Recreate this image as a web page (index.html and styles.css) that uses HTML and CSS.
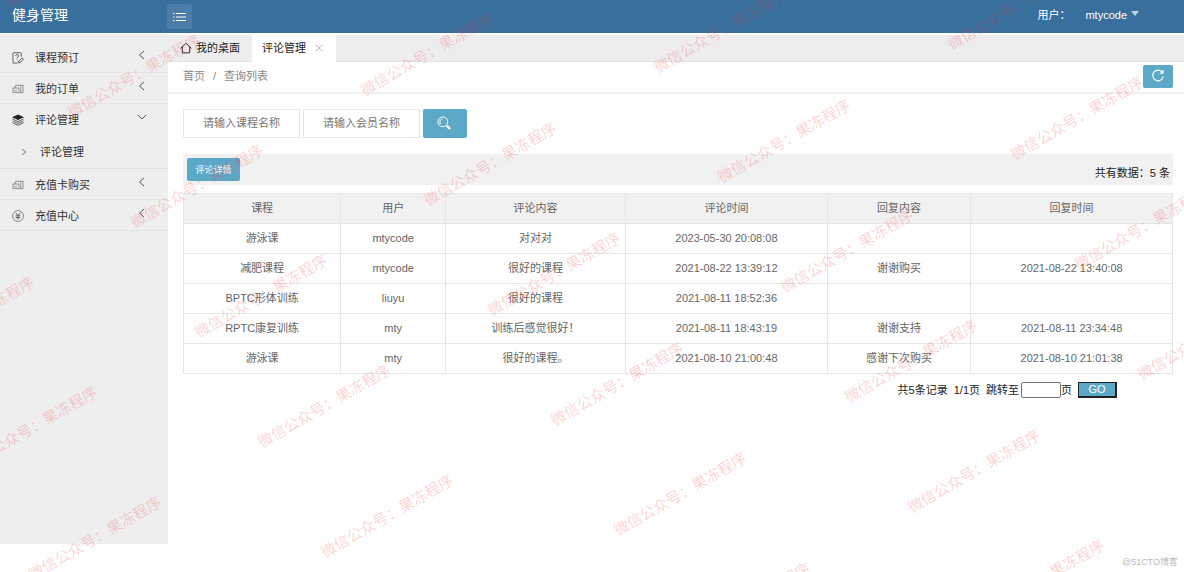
FILE: index.html
```html
<!DOCTYPE html>
<html lang="zh-CN">
<head>
<meta charset="utf-8">
<title>健身管理</title>
<link rel="stylesheet" href="styles.css">
</head>
<body>
<header class="header">
  <div class="logo">健身管理</div>
  <button class="menu-toggle" type="button" aria-label="切换菜单">
    <svg width="14" height="10" viewBox="0 0 14 10" fill="none" stroke="currentColor"><path d="M3 1.500h10M3 5h10M3 8.500h10M0 1.500h1.500M0 5h1.500M0 8.500h1.500"/></svg>
  </button>
  <div class="user">
    <span>用户：</span>
    <button class="user-name" type="button">mtycode<span class="caret"></span></button>
  </div>
</header>

<div class="body">
  <nav class="sidebar">
    <a class="item" href="#">
      <svg class="icon" viewBox="0 0 13 13" fill="none" stroke="currentColor"><path d="M10 5V1.500Q10 .8 9.300.8H1.700Q1 .8 1 1.500V11.200Q1 12 1.700 12H6M3.800 4.200Q4 2.800 5.500 2.800T7.200 4.300Q7.200 5.200 5.600 6V7M5.600 8.200V9M7 11.800L7.500 9.800L11 6.300L12.500 7.700L9 11.300Z"/></svg>
      <span class="label">课程预订</span>
      <svg class="chev" viewBox="0 0 8 8" fill="none" stroke="currentColor"><path d="M6 0L1.500 4L6 8"/></svg>
    </a>
    <a class="item" href="#">
      <svg class="icon faint" viewBox="0 0 13 13" fill="none" stroke="currentColor"><path d="M4 5V2.500H12V10.500H8M9.500 2.500V10.500M1 5.500H7.500V10.500H1ZM2.500 8.500H5.500M2.500 5.500L4 3.500"/></svg>
      <span class="label">我的订单</span>
      <svg class="chev" viewBox="0 0 8 8" fill="none" stroke="currentColor"><path d="M6 0L1.500 4L6 8"/></svg>
    </a>
    <a class="item open" href="#">
      <svg class="icon" viewBox="0 0 13 13" fill="none" stroke="currentColor"><path fill="#222" stroke="none" d="M6.500.5L13 3.500L6.500 6.500L0 3.500Z"/><path d="M.5 5.500L6.500 8.200L12.500 5.500M.5 7.500L6.500 10.200L12.500 7.500M.5 9.500L6.500 12.200L12.500 9.500"/></svg>
      <span class="label">评论管理</span>
      <svg class="chev" viewBox="0 0 8 8" fill="none" stroke="currentColor"><path d="M0 2L4 6L8 2"/></svg>
    </a>
    <a class="subitem" href="#">
      <svg class="sub-chev" viewBox="0 0 8 8" fill="none" stroke="currentColor"><path d="M2.500 1L5.500 4L2.500 7"/></svg>
      <span>评论管理</span>
    </a>
    <a class="item" href="#">
      <svg class="icon faint" viewBox="0 0 13 13" fill="none" stroke="currentColor"><path d="M4 5V2.500H12V10.500H8M9.500 2.500V10.500M1 5.500H7.500V10.500H1ZM2.500 8.500H5.500M2.500 5.500L4 3.500"/></svg>
      <span class="label">充值卡购买</span>
      <svg class="chev" viewBox="0 0 8 8" fill="none" stroke="currentColor"><path d="M6 0L1.500 4L6 8"/></svg>
    </a>
    <a class="item" href="#">
      <svg class="icon" viewBox="0 0 13 13" fill="none" stroke="currentColor"><circle cx="6.500" cy="6.500" r="5.900" stroke-width=".7"/><path d="M4 3L6.500 6L9 3M6.500 6V10.300M4 6.300H9M4 8.200H9"/></svg>
      <span class="label">充值中心</span>
      <svg class="chev" viewBox="0 0 8 8" fill="none" stroke="currentColor"><path d="M6 0L1.500 4L6 8"/></svg>
    </a>
  </nav>

  <main class="main">
    <div class="tabs">
      <a class="tab" href="#"><svg class="home" viewBox="0 0 13 12" fill="none" stroke="currentColor"><path d="M.5 6.500L6.500 1L12.500 6.500M2.500 5V11.300H10.500V5"/></svg>我的桌面</a>
      <div class="tab active">评论管理
        <button class="close" type="button" aria-label="关闭"><svg width="8" height="8" viewBox="0 0 8 8" fill="none" stroke="currentColor"><path d="M.5.5L7.500 7.500M7.500.5L.5 7.500"/></svg></button>
      </div>
    </div>
    <div class="crumbs">
      <a href="#">首页</a><span>/</span><a href="#">查询列表</a>
      <button class="refresh" type="button" aria-label="刷新">
        <svg width="14" height="14" viewBox="0 0 14 14" fill="none" stroke="currentColor" stroke-width="1.200"><path d="M11.500 3.500A5.300 5.300 0 1 0 12.300 7.500M12 1V4.200H8.800"/></svg>
      </button>
    </div>

    <div class="content">
      <form class="search">
        <input type="text" placeholder="请输入课程名称" aria-label="课程名称">
        <input type="text" placeholder="请输入会员名称" aria-label="会员名称">
        <button class="search-btn" type="button" aria-label="搜索">
          <svg width="14" height="14" viewBox="0 0 14 14" fill="none" stroke="currentColor"><circle cx="5.800" cy="5.800" r="4.900"/><path d="M3.500 8A3.300 3.300 0 0 1 5.500 2.800"/><path stroke-width="2.400" stroke-linecap="round" d="M10.500 10.500L12.500 12.300"/></svg>
        </button>
      </form>

      <div class="toolbar">
        <button class="detail" type="button">评论详情</button>
        <span class="count">共有数据：5 条</span>
      </div>

      <table class="grid">
        <colgroup><col class="c-course"><col class="c-user"><col class="c-text"><col class="c-time"><col class="c-reply"><col class="c-time"></colgroup>
        <thead>
          <tr><th>课程</th><th>用户</th><th>评论内容</th><th>评论时间</th><th>回复内容</th><th>回复时间</th></tr>
        </thead>
        <tbody>
          <tr><td>游泳课</td><td>mtycode</td><td>对对对</td><td>2023-05-30 20:08:08</td><td></td><td></td></tr>
          <tr><td>减肥课程</td><td>mtycode</td><td>很好的课程</td><td>2021-08-22 13:39:12</td><td>谢谢购买</td><td>2021-08-22 13:40:08</td></tr>
          <tr><td>BPTC形体训练</td><td>liuyu</td><td>很好的课程</td><td>2021-08-11 18:52:36</td><td></td><td></td></tr>
          <tr><td>RPTC康复训练</td><td>mty</td><td>训练后感觉很好！</td><td>2021-08-11 18:43:19</td><td>谢谢支持</td><td>2021-08-11 23:34:48</td></tr>
          <tr><td>游泳课</td><td>mty</td><td>很好的课程。</td><td>2021-08-10 21:00:48</td><td>感谢下次购买</td><td>2021-08-10 21:01:38</td></tr>
        </tbody>
      </table>

      <form class="pager">
        <span>共5条记录</span>
        <span>1/1页</span>
        <label class="jump">跳转至<input type="text">页</label>
        <button class="go" type="button">GO</button>
      </form>
    </div>
  </main>
</div>

<svg class="watermark" aria-hidden="true">
  <text transform="translate(71 -34) rotate(-30)">微信公众号：果冻程序</text>
  <text transform="translate(134 76) rotate(-30)">微信公众号：果冻程序</text>
  <text transform="translate(197 186) rotate(-30)">微信公众号：果冻程序</text>
  <text transform="translate(261 296) rotate(-30)">微信公众号：果冻程序</text>
  <text transform="translate(324 406) rotate(-30)">微信公众号：果冻程序</text>
  <text transform="translate(387 516) rotate(-30)">微信公众号：果冻程序</text>
  <text transform="translate(-32 318) rotate(-30)">微信公众号：果冻程序</text>
  <text transform="translate(31 428) rotate(-30)">微信公众号：果冻程序</text>
  <text transform="translate(95 538) rotate(-30)">微信公众号：果冻程序</text>
  <text transform="translate(427 54) rotate(-30)">微信公众号：果冻程序</text>
  <text transform="translate(490 164) rotate(-30)">微信公众号：果冻程序</text>
  <text transform="translate(554 274) rotate(-30)">微信公众号：果冻程序</text>
  <text transform="translate(617 384) rotate(-30)">微信公众号：果冻程序</text>
  <text transform="translate(680 494) rotate(-30)">微信公众号：果冻程序</text>
  <text transform="translate(744 604) rotate(-30)">微信公众号：果冻程序</text>
  <text transform="translate(720 31) rotate(-30)">微信公众号：果冻程序</text>
  <text transform="translate(784 141) rotate(-30)">微信公众号：果冻程序</text>
  <text transform="translate(847 251) rotate(-30)">微信公众号：果冻程序</text>
  <text transform="translate(911 361) rotate(-30)">微信公众号：果冻程序</text>
  <text transform="translate(974 471) rotate(-30)">微信公众号：果冻程序</text>
  <text transform="translate(1038 581) rotate(-30)">微信公众号：果冻程序</text>
  <text transform="translate(1014 8) rotate(-30)">微信公众号：果冻程序</text>
  <text transform="translate(1077 118) rotate(-30)">微信公众号：果冻程序</text>
  <text transform="translate(1141 228) rotate(-30)">微信公众号：果冻程序</text>
  <text transform="translate(1204 338) rotate(-30)">微信公众号：果冻程序</text>
</svg>
<div class="credit">@51CTO博客</div>
</body>
</html>
```
FILE: styles.css
```css
* { box-sizing: border-box; }
body {
  margin: 0;
  height: 100vh;
  overflow: hidden;
  position: relative;
  background: #fff;
  color: #333;
  font: 11px/16px "Liberation Sans", "Noto Sans CJK SC", sans-serif;
}
a { color: inherit; text-decoration: none; }
button, input { font: inherit; margin: 0; padding: 0; }
button { border: 0; background: none; color: inherit; cursor: pointer; }
svg { display: block; }

.header {
  display: flex;
  align-items: center;
  height: 33px;
  background: #386f9d;
  color: #fff;
}
.logo { width: 167px; padding: 0 0 3px 12px; font-size: 14px; line-height: 30px; }
.menu-toggle {
  display: grid;
  place-items: center;
  width: 25px;
  height: 25px;
  border-radius: 2px;
  background: #4b7da8;
}
.user { display: flex; gap: 15px; margin-left: auto; padding: 0 45px 3px 0; line-height: 30px; }
.user-name { display: flex; align-items: center; gap: 4px; }
.caret {
  border: 4px solid transparent;
  border-top: 5px solid #c3d3e1;
  border-bottom: 0;
  margin-bottom: 3px;
}

.body { display: flex; padding-top: 2px; }
.sidebar {
  flex: 0 0 168px;
  height: calc(100vh - 63px);
  padding-top: 7px;
  background: #eee;
  box-shadow: 0 -1px #eee;
}
.item {
  display: flex;
  align-items: center;
  height: 31px;
  padding: 1px 22px 0 12px;
  border-bottom: 1px solid #e4e4e4;
}
.item.open { border-bottom-color: transparent; }
.icon { width: 12px; height: 12px; margin-right: 11px; color: #555; }
.faint { color: #888; }
.label { flex: 1; }
.chev { width: 8px; height: 8px; margin-bottom: 5px; color: #555; }
.subitem {
  display: flex;
  align-items: center;
  height: 34px;
  padding-left: 20px;
  border-bottom: 1px solid #e0e0e0;
}
.sub-chev { width: 8px; height: 8px; margin-right: 12px; color: #666; }

.main { flex: 1; min-width: 0; }
.tabs {
  display: flex;
  height: 27px;
  border-bottom: 1px solid #e2e2e4;
  background: #ededf0;
  color: #222;
}
.tab { display: flex; align-items: center; padding: 0 12px; }
.tab.active { height: 27px; gap: 9px; padding: 0 13px 1px 10px; background: #fff; }
.home { width: 12px; height: 12px; margin-right: 4px; }
.close { color: #bbb; }
.crumbs {
  display: flex;
  align-items: center;
  gap: 8px;
  height: 32px;
  padding: 0 11px 2px 15px;
  border-bottom: 2px solid #f1f1f1;
  color: #888;
}
.refresh, .search-btn, .detail { border-radius: 2px; background: #5ca9c7; color: #fff; }
.refresh {
  display: grid;
  place-items: center;
  width: 30px;
  height: 23px;
  margin-left: auto;
}

.content { padding: 15px 11px 0 15px; }
.search { display: flex; gap: 3px; }
.search input {
  width: 117px;
  height: 29px;
  padding-bottom: 1px;
  border: 1px solid #e6e6e6;
  text-align: center;
}
.search input::placeholder { color: #757575; }
.search-btn { display: grid; place-items: center; width: 44px; height: 29px; padding: 0 2px 2px 0; }

.toolbar {
  display: flex;
  align-items: center;
  justify-content: space-between;
  height: 31px;
  margin: 16px 0 8px;
  padding: 0 3px 0 4px;
  background: #f1f1f1;
  color: #222;
}
.detail { width: 53px; height: 23px; font-size: 9px; }
.count { padding-top: 7px; }

.grid {
  width: 100%;
  table-layout: fixed;
  border-collapse: collapse;
  color: #666;
  text-align: center;
}
.c-course { width: 15.9%; }
.c-user { width: 10.6%; }
.c-text { width: 18.2%; }
.c-time { width: 20.4%; }
.c-reply { width: 14.5%; }
.grid th, .grid td {
  height: 30px;
  padding: 0 0 2px;
  border: 1px solid #e6e6e6;
  font-weight: 400;
}
.grid th { background: #f1f1f1; }

.pager {
  display: flex;
  align-items: center;
  justify-content: flex-end;
  gap: 6px;
  padding: 8px 56px 0 0;
  color: #222;
}
.jump { display: flex; align-items: center; }
.jump input {
  width: 40px;
  height: 16px;
  margin-left: 2px;
  border: 1px solid #767676;
  border-radius: 2px;
}
.go {
  width: 39px;
  height: 16px;
  border: 1px solid #222;
  border-width: 1px 2px 2px 1px;
  background: #5ca9c7;
  color: #fff;
  line-height: 13px;
}

.watermark {
  position: absolute;
  inset: 0;
  width: 100%;
  height: 100%;
  pointer-events: none;
  fill: rgba(240, 50, 50, .22);
  font-size: 15px;
  text-anchor: middle;
  dominant-baseline: central;
}
.credit {
  position: absolute;
  right: 6px;
  bottom: 2px;
  color: #bbb;
  font-size: 9px;
}
```
